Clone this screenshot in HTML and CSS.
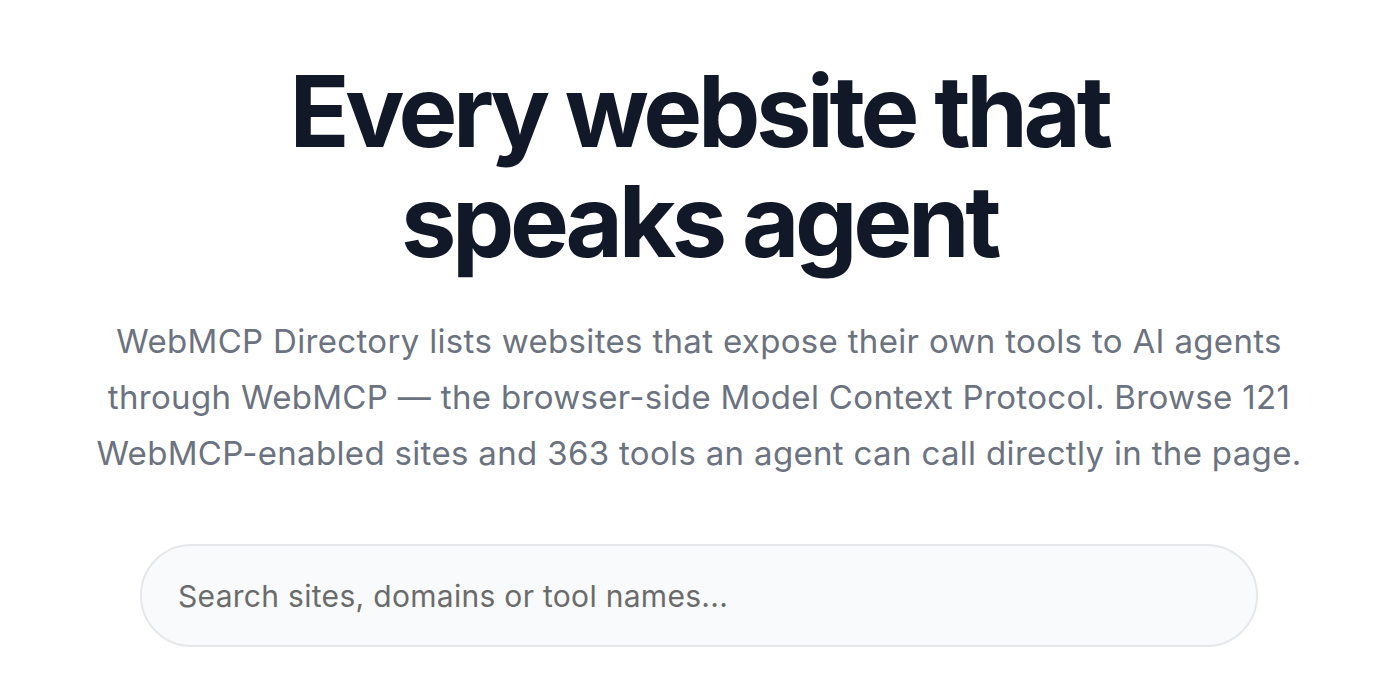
FILE: index.html
```html
<!DOCTYPE html>
<html lang="en">
<head>
  <meta charset="UTF-8" />
  <meta name="viewport" content="width=device-width, initial-scale=1.0"/>
  <title>WebMCP Directory</title>
  <link rel="stylesheet" href="styles.css">
</head>
<body>
  <section id="hero">
    <h1>Every website that<br>speaks agent</h1>
    <p class="lead">WebMCP Directory lists websites that expose their own tools to AI agents through WebMCP — the browser-side Model Context Protocol. Browse 121 WebMCP-enabled sites and 363 tools an agent can call directly in the page.</p>
    <div class="search">
      <input type="text" placeholder="Search sites, domains or tool names...">
    </div>
  </section>
</body>
</html>
```

FILE: styles.css
```css
body {
  font-family: Inter, "Noto Sans", sans-serif;
  margin: 0;
  padding: 0;
  background: #fff;
  color: #111827;
}
#hero {
  max-width: 1224px;
  margin: 0 auto;
  padding: 56px 0 0 12px;
  text-align: center;
}
h1 {
  margin: 0;
  font-size: 99px;
  font-weight: 700;
  line-height: 110px;
  letter-spacing: -0.044em;
  color: #111827;
}
.lead {
  margin: 37px auto 0;
  font-size: 33px;
  line-height: 56px;
  letter-spacing: 0.01em;
  color: #6b7280;
}
.search {
  margin: 63px auto 0;
  max-width: 1118px;
}
.search input {
  display: block;
  box-sizing: border-box;
  width: 100%;
  height: 103px;
  padding: 0 36px;
  border: 2px solid #e5e7eb;
  border-radius: 999px;
  background: #f9fafb;
  font-family: inherit;
  font-size: 30px;
  letter-spacing: 0.01em;
  color: #111827;
  outline: none;
}
.search input::placeholder {
  color: #6b6b6b;
}
```
